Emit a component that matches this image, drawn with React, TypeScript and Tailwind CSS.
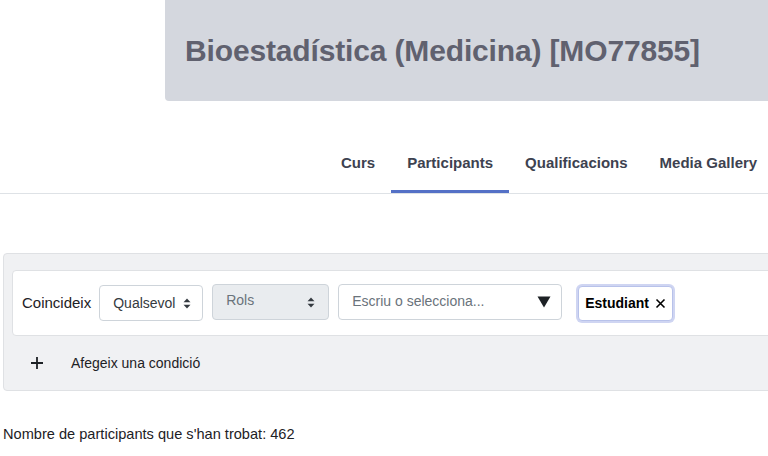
import React from "react";

const font = { fontFamily: '"Liberation Sans", Arial, sans-serif' };

function UpDown() {
  return (
    <svg width="8" height="11" viewBox="0 0 8 11" className="shrink-0">
      <path d="M4 0.5 L7.5 4.3 L0.5 4.3 Z" fill="#343a40" />
      <path d="M4 10.5 L7.5 6.7 L0.5 6.7 Z" fill="#343a40" />
    </svg>
  );
}

export default function App() {
  return (
    <div className="w-[768px] h-[456px] overflow-hidden bg-white text-[#1d2125]" style={font}>
      <div className="ml-[165px] h-[101px] bg-[#d4d7de] rounded-bl-[4px] flex items-center pl-[20px]">
        <h1 className="text-[30px] font-bold text-[#60616f] tracking-[-0.15px] whitespace-nowrap">
          Bioestadística (Medicina) [MO77855]
        </h1>
      </div>

      <nav className="pt-[32px] border-b border-[#dee2e6] flex pl-[325px] whitespace-nowrap">
        <div className="h-[60px] px-[16px] flex items-center pt-[3px] border-b-[3px] border-transparent text-[15px] font-bold text-[#3d4250]">Curs</div>
        <div className="h-[60px] px-[16px] flex items-center pt-[3px] border-b-[3px] border-[#5470c6] text-[15px] font-bold text-[#3d4250]">Participants</div>
        <div className="h-[60px] px-[16px] flex items-center pt-[3px] border-b-[3px] border-transparent text-[15px] font-bold text-[#3d4250]">Qualificacions</div>
        <div className="h-[60px] px-[16px] flex items-center pt-[3px] border-b-[3px] border-transparent text-[15px] font-bold text-[#3d4250]">Media Gallery</div>
      </nav>

      <div className="mt-[59px] ml-[3px] w-[820px] bg-[#f0f1f3] border border-[#dfe1e4] rounded-[4px] pt-[16px] pl-[8px]">
        <div className="h-[66px] bg-white border border-[#dfe1e4] rounded-l-[4px] flex items-center pl-[9px]">
          <span className="text-[15px] text-[#1d2125] mr-[8px]">Coincideix</span>
          <div className="w-[104px] h-[36px] border border-[#ced4da] rounded-[4px] flex items-center justify-between pl-[13px] pr-[11px] text-[14px] text-[#343a40] mr-[9px]">
            <span>Qualsevol</span>
            <UpDown />
          </div>
          <div className="w-[117px] h-[36px] border border-[#ced4da] bg-[#e9ecef] rounded-[4px] flex items-center justify-between pl-[13px] pr-[13px] text-[14px] text-[#6a737b] mr-[9px] -mt-[2px]">
            <span className="-mt-[3px]">Rols</span>
            <UpDown />
          </div>
          <div className="w-[224px] h-[36px] border border-[#ced4da] rounded-[4px] flex items-center justify-between pl-[13px] pr-[10px] text-[14px] text-[#6a737b] mr-[16px] -mt-[2px]">
            <span className="-mt-[2px]">Escriu o selecciona...</span>
            <svg width="14" height="12" viewBox="0 0 14 12"><path d="M0.5 0.5 H13.5 L7 11.5 Z" fill="#1d2125" /></svg>
          </div>
          <div className="h-[35px] pl-[6px] pr-[6px] flex items-center gap-[6px] border border-[#b8c2ea] ring-[2px] ring-[#cfd5f2] rounded-[4px] bg-white text-[14px] font-bold text-[#000]">
            <span>Estudiant</span>
            <svg width="11" height="11" viewBox="0 0 11 11"><path d="M1.5 1.5 L9.5 9.5 M9.5 1.5 L1.5 9.5" stroke="#000" strokeWidth="1.6" /></svg>
          </div>
        </div>
        <div className="h-[54px] flex items-center pl-[18px]">
          <svg width="14" height="14" viewBox="0 0 14 14" className="mr-[27px]"><path d="M7 1 V13 M1 7 H13" stroke="#1d2125" strokeWidth="1.8" /></svg>
          <span className="text-[14px] text-[#1d2125]">Afegeix una condició</span>
        </div>
      </div>

      <div className="mt-[33px] pl-[3px] text-[14.6px] text-[#1d2125]">
        Nombre de participants que s'han trobat: 462
      </div>
    </div>
  );
}
